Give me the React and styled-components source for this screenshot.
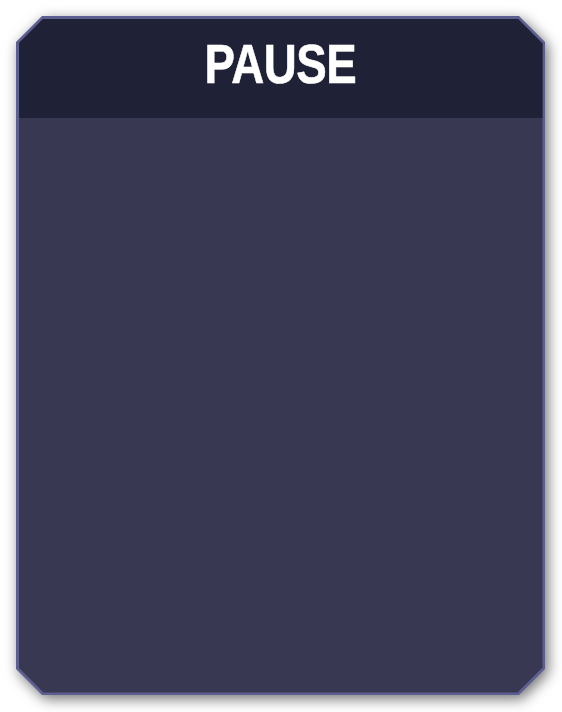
import React from "react";
import styled, { createGlobalStyle } from "styled-components";

const GlobalStyle = createGlobalStyle`
  html, body {
    margin: 0;
    padding: 0;
    background: #ffffff;
  }
`;

const chamfer = (c) => `polygon(
  ${c}px 0, calc(100% - ${c}px) 0, 100% ${c}px, 100% calc(100% - ${c}px),
  calc(100% - ${c}px) 100%, ${c}px 100%, 0 calc(100% - ${c}px), 0 ${c}px
)`;

const Page = styled.div`
  padding: 16px 17px 17px 16px;
  width: 529px;
  filter: drop-shadow(3px 4px 7px rgba(0, 0, 0, 0.55));
`;

const Frame = styled.div`
  height: 679px;
  padding: 2.5px;
  box-sizing: border-box;
  background: #5d5f90;
  clip-path: ${chamfer(26)};
`;

const Panel = styled.div`
  height: 100%;
  display: flex;
  flex-direction: column;
  background: #383853;
  clip-path: ${chamfer(25)};
`;

const Header = styled.div`
  height: 99px;
  flex-shrink: 0;
  display: flex;
  align-items: center;
  justify-content: center;
  background: #1f2136;
  padding-bottom: 8px;
  box-sizing: border-box;
`;

const Title = styled.h1`
  display: inline-block;
  margin: 0;
  color: #ffffff;
  font-family: "Liberation Sans", Arial, sans-serif;
  font-weight: 700;
  font-size: 55px;
  line-height: 1;
  letter-spacing: -0.5px;
  transform: scaleX(0.83);
  -webkit-text-stroke: 0.6px #ffffff;
`;

const Body = styled.div`
  flex: 1;
`;

export default function App() {
  return (
    <>
      <GlobalStyle />
      <Page>
        <Frame>
          <Panel>
            <Header>
              <Title>PAUSE</Title>
            </Header>
            <Body />
          </Panel>
        </Frame>
      </Page>
    </>
  );
}
